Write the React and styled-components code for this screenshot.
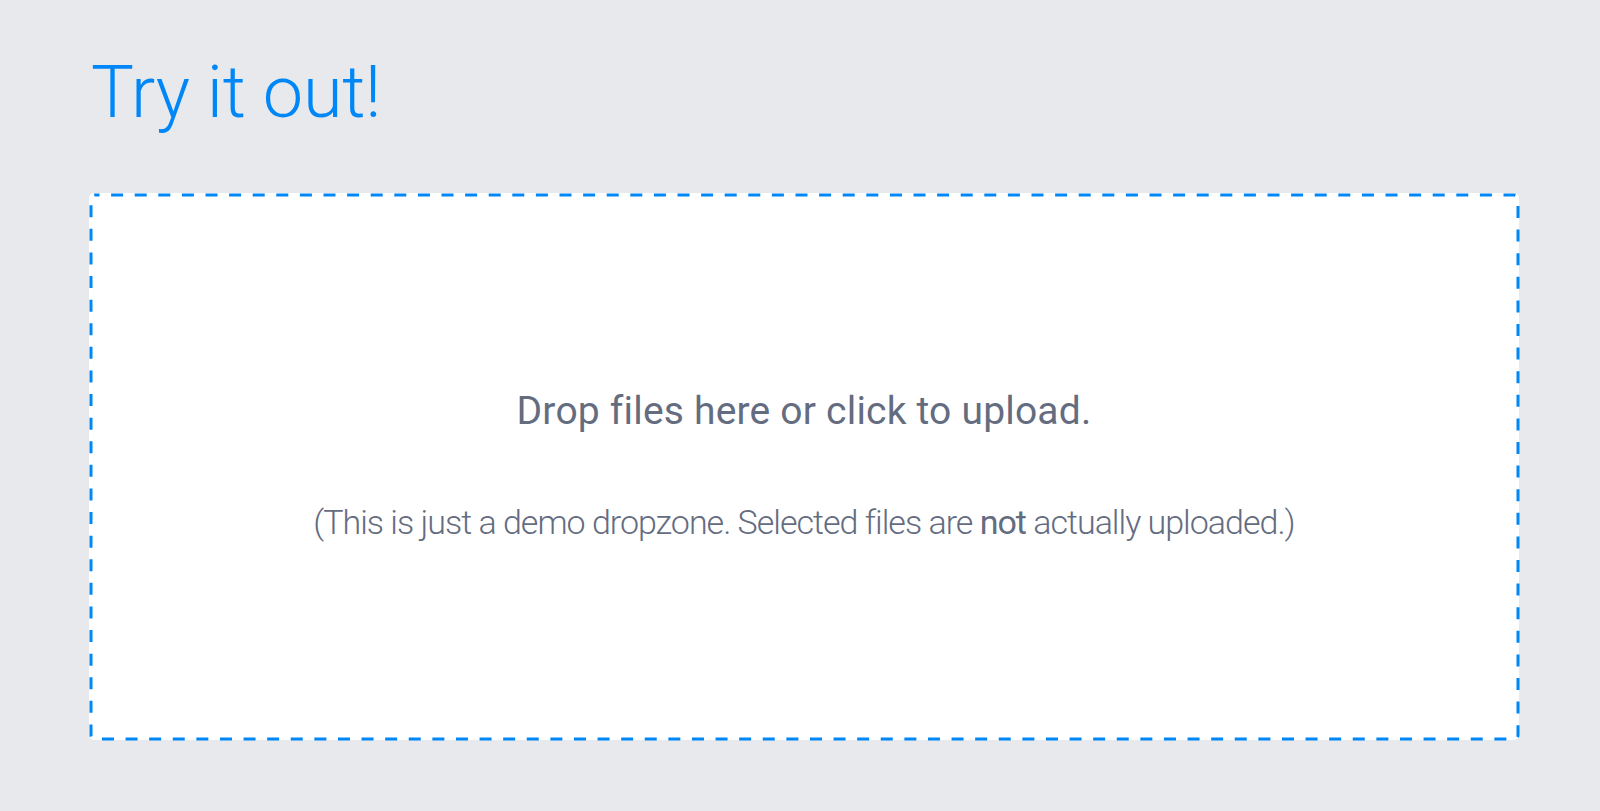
import React from 'react';
import styled, { createGlobalStyle } from 'styled-components';

const GlobalStyle = createGlobalStyle`
  html, body {
    margin: 0;
    padding: 0;
    background: #e8e9ec;
    font-family: Roboto, 'Liberation Sans', sans-serif;
  }
`;

const Page = styled.div`
  min-height: 811px;
  box-sizing: border-box;
  padding: 50px 81px 0 89px;
`;

const Title = styled.h1`
  margin: 0 0 57px 2px;
  font-size: 72px;
  line-height: 86px;
  font-weight: 300;
  letter-spacing: -0.3px;
  color: #0087f7;
`;

const Dropzone = styled.div`
  position: relative;
  box-sizing: border-box;
  height: 547px;
  background: #fff;
  border-radius: 5px;
  display: flex;
  flex-direction: column;
  align-items: center;
  justify-content: center;
  padding-bottom: 3px;
  color: #646c7f;
  text-align: center;
  cursor: pointer;
`;

// dashed outline drawn as svg so the dash length matches the long dashes
const Outline = styled.svg`
  position: absolute;
  top: 1.5px;
  left: 1.5px;
  width: calc(100% - 3px);
  height: calc(100% - 3px);
  overflow: visible;
  pointer-events: none;

  rect {
    fill: none;
    stroke: #0087f7;
    stroke-width: 3;
    stroke-dasharray: 12 11.6;
    stroke-dashoffset: 7.5;
  }
`;

const Message = styled.div`
  font-size: 39px;
  line-height: 46px;
  font-weight: 400;
  letter-spacing: 0.2px;
`;

const Note = styled.div`
  margin-top: 68px;
  font-size: 34px;
  line-height: 40px;
  font-weight: 300;
  letter-spacing: -1px;

  strong {
    font-weight: 400;
  }
`;

function App() {
  return (
    <Page>
      <GlobalStyle />
      <Title>Try it out!</Title>
      <Dropzone>
        <Outline>
          <rect x="0" y="0" width="100%" height="100%" rx="4" ry="4" />
        </Outline>
        <Message>Drop files here or click to upload.</Message>
        <Note>
          (This is just a demo dropzone. Selected files are <strong>not</strong> actually uploaded.)
        </Note>
      </Dropzone>
    </Page>
  );
}

export default App;
